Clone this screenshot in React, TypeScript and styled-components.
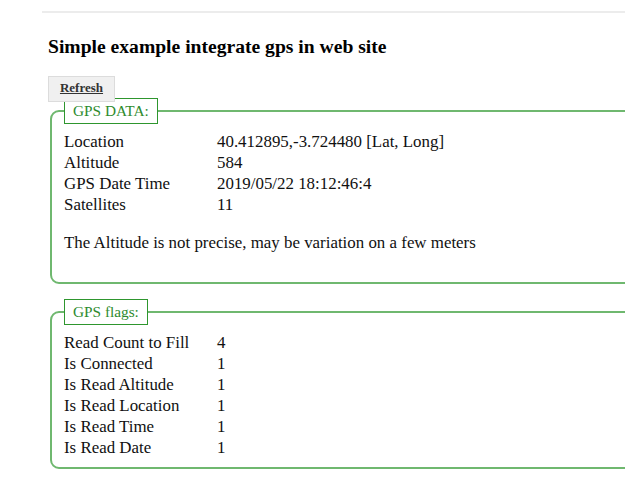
import React from "react";
import styled, { createGlobalStyle } from "styled-components";

const GlobalStyle = createGlobalStyle`
  html, body { margin: 0; padding: 0; background: #ffffff; }
  body { font-family: "Liberation Serif", "Times New Roman", serif; color: #111; overflow: hidden; }
`;

const Page = styled.div`
  width: 625px;
  overflow: hidden;
  padding-top: 11px;
`;

const TopRule = styled.div`
  margin-left: 42px;
  height: 2px;
  background: #ececec;
`;

const Content = styled.div`
  padding-left: 48px;
`;

const Title = styled.h3`
  margin: 23px 0 18px;
  font-size: 19.6px;
  font-weight: bold;
  line-height: 22px;
  color: #000;
`;

const RefreshButton = styled.button`
  position: relative;
  z-index: 2;
  display: block;
  width: 67px;
  height: 26px;
  margin: 0 0 -4px;
  padding: 0 0 3px;
  background: #f0f0f0;
  border: 1px solid #dcdcdc;
  font-family: "Liberation Serif", "Times New Roman", serif;
  font-size: 13px;
  font-weight: bold;
  color: #333;
  text-decoration: underline;
  cursor: pointer;
`;

const Box = styled.fieldset<{ $gap?: number }>`
  margin: ${(p) => p.$gap ?? 0}px 0 0 2px;
  width: 700px;
  padding: 7px 12px 0;
  border: 2px solid #6fb86f;
  border-radius: 9px;
`;

const Legend = styled.legend`
  padding: 2px 8px 3px;
  border: 1px solid #2e962e;
  background: #fff;
  color: #2e8b2e;
  font-size: 15.3px;
  line-height: 19px;
`;

const Table = styled.table`
  border-collapse: collapse;
  font-size: 16.9px;
  line-height: 21px;
  td { padding: 0; vertical-align: top; }
  td:first-child { width: 153px; }
`;

const Note = styled.p`
  margin: 17px 0 29px;
  font-size: 16.9px;
  line-height: 21px;
`;

const Spacer = styled.div`
  height: 9px;
`;

const gps: [string, string][] = [
  ["Location", "40.412895,-3.724480 [Lat, Long]"],
  ["Altitude", "584"],
  ["GPS Date Time", "2019/05/22 18:12:46:4"],
  ["Satellites", "11"],
];

const flags: [string, string][] = [
  ["Read Count to Fill", "4"],
  ["Is Connected", "1"],
  ["Is Read Altitude", "1"],
  ["Is Read Location", "1"],
  ["Is Read Time", "1"],
  ["Is Read Date", "1"],
];

function Rows({ data }: { data: [string, string][] }) {
  return (
    <Table>
      <tbody>
        {data.map(([k, v]) => (
          <tr key={k}>
            <td>{k}</td>
            <td>{v}</td>
          </tr>
        ))}
      </tbody>
    </Table>
  );
}

export default function App() {
  return (
    <>
      <GlobalStyle />
      <Page>
        <TopRule />
        <Content>
          <Title>Simple example integrate gps in web site</Title>
          <RefreshButton>Refresh</RefreshButton>
          <Box>
            <Legend>GPS DATA:</Legend>
            <Rows data={gps} />
            <Note>The Altitude is not precise, may be variation on a few meters</Note>
          </Box>
          <Box $gap={15}>
            <Legend>GPS flags:</Legend>
            <Rows data={flags} />
            <Spacer />
          </Box>
        </Content>
      </Page>
    </>
  );
}
